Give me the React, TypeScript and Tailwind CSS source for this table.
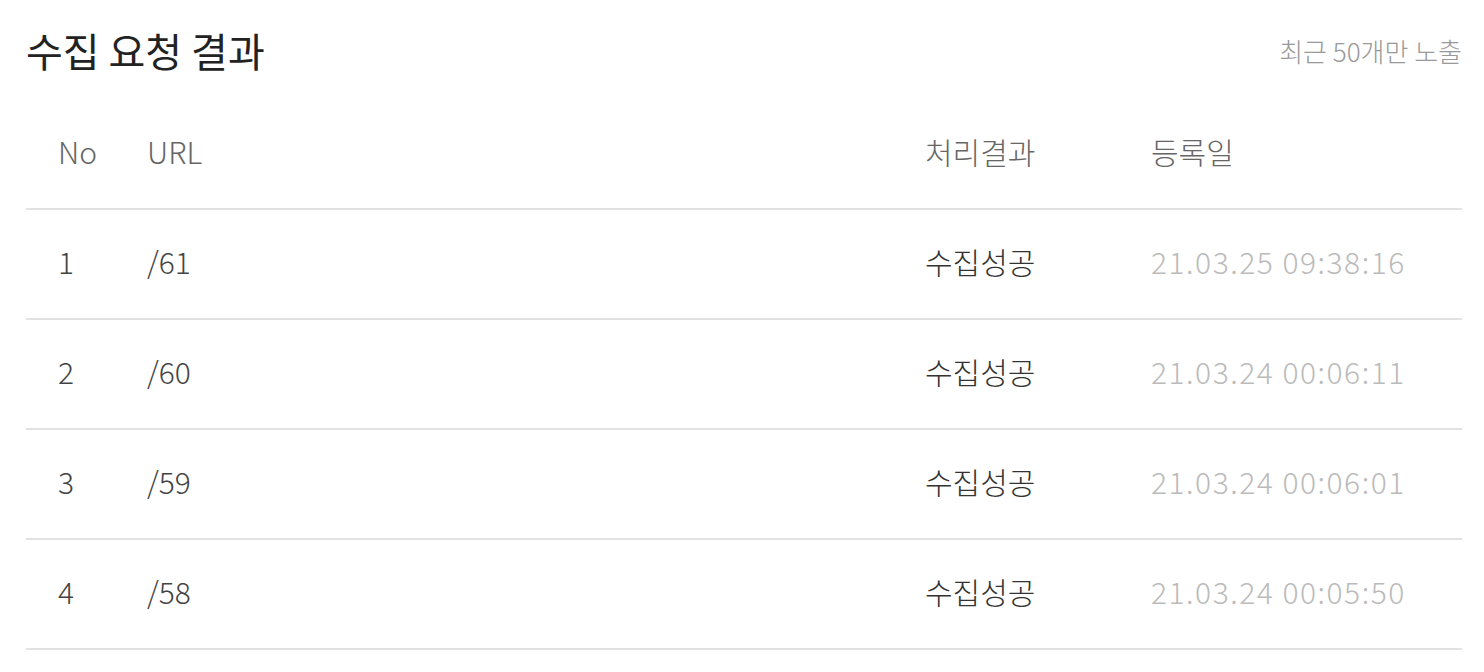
const rows = [
  { no: 1, url: "/61", result: "수집성공", date: "21.03.25 09:38:16" },
  { no: 2, url: "/60", result: "수집성공", date: "21.03.24 00:06:11" },
  { no: 3, url: "/59", result: "수집성공", date: "21.03.24 00:06:01" },
  { no: 4, url: "/58", result: "수집성공", date: "21.03.24 00:05:50" },
];

const cols = "grid grid-cols-[89px_778px_226px_1fr] pl-8 pb-[5px] items-center";

export default function App() {
  return (
    <main
      className="min-h-screen bg-white pl-[26px] pr-[22px] pt-[24px]"
      style={{ fontFamily: '"Noto Sans CJK KR", "Noto Sans", sans-serif' }}
    >
      <header className="flex items-center justify-between">
        <h1 className="text-[40px] font-normal leading-[52px] text-[#222]">수집 요청 결과</h1>
        <p className="text-[26px] font-light text-[#999]">최근 50개만 노출</p>
      </header>

      <div className={`${cols} mt-[24px] h-[110px] border-b-2 border-[#e2e2e2] text-[30px] font-light text-[#666]`}>
        <span>No</span>
        <span>URL</span>
        <span>처리결과</span>
        <span>등록일</span>
      </div>

      {rows.map((row) => (
        <div
          key={row.no}
          className={`${cols} h-[110px] border-b-2 border-[#e2e2e2] text-[30px] font-light text-[#444]`}
        >
          <span>{row.no}</span>
          <span>{row.url}</span>
          <span className="text-[#333]">{row.result}</span>
          <span className="tracking-[1.5px] text-[#bbb]">{row.date}</span>
        </div>
      ))}
    </main>
  );
}
